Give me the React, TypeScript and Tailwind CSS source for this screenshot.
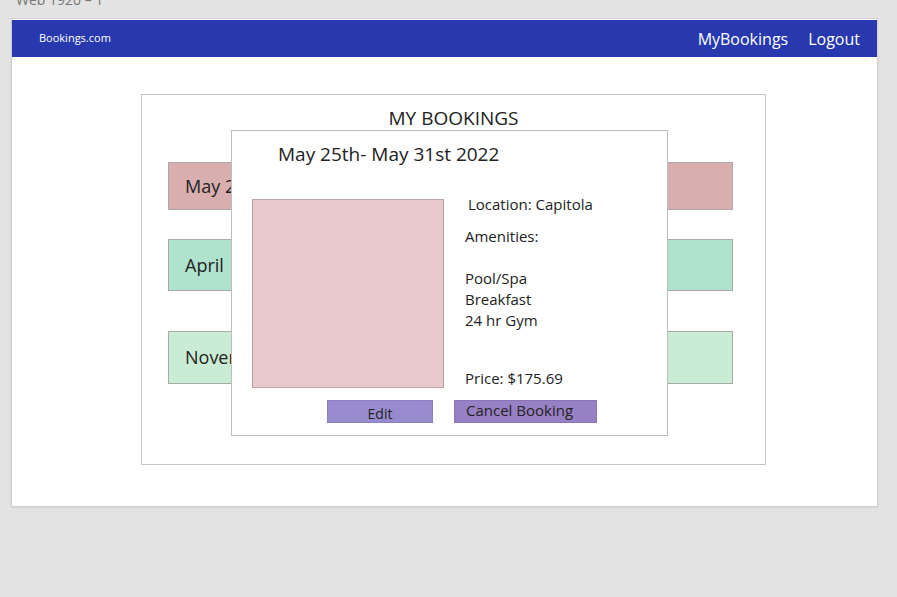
const BOOKINGS = [
  { label: "May 25th- May 31st 2022", bg: "bg-[#d9aeaf]", h: "h-[48px]", mt: "mt-[31px]" },
  { label: "April", bg: "bg-[#b0e3cd]", h: "h-[52px]", mt: "mt-[29px]" },
  { label: "November", bg: "bg-[#cbecd4]", h: "h-[53px]", mt: "mt-[40px]" },
];

const AMENITIES = ["Pool/Spa", "Breakfast", "24 hr Gym"];

export default function App() {
  return (
    <div
      className="w-[897px] h-[597px] bg-[#e3e3e3] overflow-hidden"
      style={{ fontFamily: '"Open Sans", "Noto Sans", sans-serif' }}
    >
      <div className="h-[18px] overflow-hidden pl-[16px]">
        <div className="-mt-[11px] text-[14px] text-[#777]">Web 1920 – 1</div>
      </div>

      <div className="ml-[11px] w-[867px] h-[489px] bg-white border border-[#cfcfcf] shadow-[0_1px_2px_rgba(0,0,0,0.08)] pt-[1px]">
        <header className="h-[37px] bg-[#2838ae] flex items-center text-white">
          <span className="ml-[27px] text-[11px]">Bookings.com</span>
          <nav className="ml-auto mr-[17px] flex items-center gap-[20px] text-[16px]">
            <span>MyBookings</span>
            <span>Logout</span>
          </nav>
        </header>

        <section className="relative ml-[129px] mt-[37px] w-[625px] h-[371px] border border-[#c4c4c4]">
          <h1 className="mt-[10px] text-center text-[19px] leading-[26px] text-[#222]">MY BOOKINGS</h1>

          <div className="flex flex-col pl-[26px]">
            {BOOKINGS.map((b) => (
              <div
                key={b.label}
                className={`${b.mt} ${b.h} ${b.bg} w-[565px] border border-[#a9a9a9] flex items-center pl-[16px] text-[18px] text-[#222]`}
              >
                {b.label}
              </div>
            ))}
          </div>

          <div className="absolute left-[89px] top-[35px] w-[437px] h-[306px] bg-white border border-[#bdbdbd] flex flex-col">
            <h2 className="mt-[10px] ml-[46px] text-[19px] leading-[26px] text-[#222]">May 25th- May 31st 2022</h2>

            <div className="mt-[32px] ml-[20px] flex">
              <div className="w-[192px] h-[189px] bg-[#e8c9cc] border border-[#b9a3a5]" />
              <div className="ml-[21px] flex flex-col text-[15px] leading-[21px] text-[#222]">
                <span className="-mt-[5px] ml-[3px]">Location: Capitola</span>
                <span className="mt-[11px]">Amenities:</span>
                <span className="mt-[21px]">
                  {AMENITIES.map((a) => (
                    <span key={a} className="block">{a}</span>
                  ))}
                </span>
                <span className="mt-[37px]">Price: $175.69</span>
              </div>
            </div>

            <div className="mt-[11px] ml-[95px] flex gap-[21px] text-[#222]">
              <button className="w-[106px] h-[23px] bg-[#978bcd] border border-[#8a80bf] text-[14px] leading-[21px] pt-[2px]">Edit</button>
              <button className="w-[143px] h-[23px] bg-[#9880c4] border border-[#8b74b8] text-[15px] leading-[19px] pb-[2px] text-left pl-[11px]">Cancel Booking</button>
            </div>
          </div>
        </section>
      </div>
    </div>
  );
}
